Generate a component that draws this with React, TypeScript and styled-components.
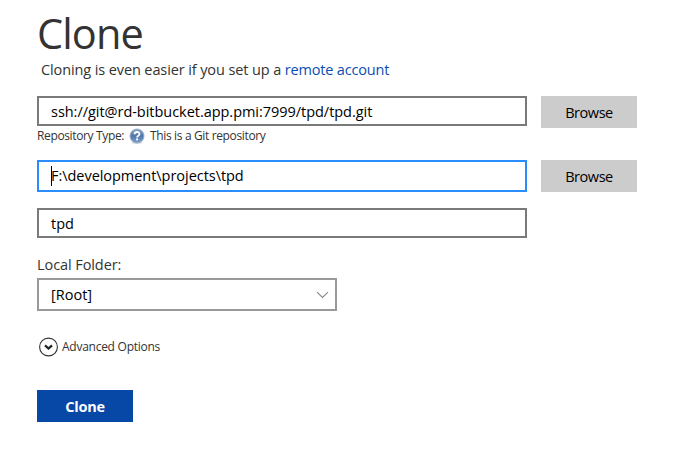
import React from "react";
import styled, { createGlobalStyle } from "styled-components";

const GlobalStyle = createGlobalStyle`
  * { box-sizing: border-box; }
  body {
    margin: 0;
    background: #fff;
    color: #333;
    font-family: "Open Sans", "Noto Sans", sans-serif;
  }
`;

const Page = styled.main`
  display: flex;
  flex-direction: column;
  align-items: flex-start;
  height: 453px;
  padding: 9px 0 0 37px;
  white-space: pre;
`;

const Title = styled.h1`
  margin: 0;
  font-size: 41.5px;
  line-height: 48px;
  font-weight: 400;
  letter-spacing: -0.9px;
`;

const Hint = styled.p`
  margin: 2px 0 0 4px;
  font-size: 14.5px;
  line-height: 21px;
  letter-spacing: -0.11px;
`;

const Link = styled.a`
  color: #0b4db3;
  text-decoration: none;
  letter-spacing: -0.18px;
`;

const FieldRow = styled.div<{ $gap: number; $height?: number }>`
  display: flex;
  gap: 14px;
  height: ${(p) => p.$height ?? 32}px;
  margin-top: ${(p) => p.$gap}px;
`;

const Field = styled.div<{ $focused?: boolean; $height?: number; $spacing?: number; $drop?: number }>`
  display: flex;
  align-items: center;
  width: 490px;
  height: ${(p) => p.$height ?? 30}px;
  padding: ${(p) => p.$drop ?? 0}px 0 0 12px;
  border: 2px solid ${(p) => (p.$focused ? "#2a8dfb" : "#7a7a7a")};
  color: #000;
  font-size: 14.5px;
  line-height: 20px;
  letter-spacing: ${(p) => p.$spacing ?? 0}px;
`;

const Caret = styled.span`
  width: 1px;
  height: 20px;
  margin-right: -1px;
  background: #000;
`;

const Button = styled.button<{ $primary?: boolean }>`
  width: 96px;
  height: 32px;
  padding: 1px 0 0;
  border: 0;
  background: ${(p) => (p.$primary ? "#0747a6" : "#ccc")};
  color: ${(p) => (p.$primary ? "#fff" : "#000")};
  font: ${(p) => (p.$primary ? 700 : 400)} 14.5px/20px "Open Sans", sans-serif;
  letter-spacing: ${(p) => (p.$primary ? -0.2 : -0.45)}px;
`;

const RepoType = styled.div`
  display: flex;
  align-items: center;
  height: 18px;
  margin-top: -1px;
  font-size: 12px;
  line-height: 18px;
  letter-spacing: -0.36px;

  svg { margin: 0 5px 0 5px; }
`;

const Label = styled.label`
  margin-top: 16px;
  font-size: 14.5px;
  line-height: 22px;
  letter-spacing: -0.08px;
`;

const Select = styled.div`
  display: flex;
  align-items: center;
  justify-content: space-between;
  width: 300px;
  height: 33px;
  margin-top: 2px;
  padding: 0 6px 0 12px;
  border: 2px solid #999;
  color: #000;
  font-size: 14.5px;
  line-height: 20px;
`;

const Advanced = styled.div`
  display: flex;
  align-items: center;
  gap: 4px;
  height: 20px;
  margin: 26px 0 33px 1px;
  font-size: 12px;
  line-height: 20px;
  letter-spacing: -0.26px;
`;

const HelpIcon = () => (
  <svg width="16" height="16" viewBox="0 0 16 16">
    <defs>
      <linearGradient id="help" x1="0" y1="0" x2="0" y2="1">
        <stop offset="0" stopColor="#86a5cc" />
        <stop offset="0.5" stopColor="#4f76a9" />
        <stop offset="1" stopColor="#7ba3d2" />
      </linearGradient>
    </defs>
    <ellipse cx="8" cy="14.8" rx="5.5" ry="1.1" fill="#ddd" />
    <circle cx="8" cy="8" r="7" fill="url(#help)" stroke="#9aa9bd" strokeWidth="0.9" />
    <path d="M5.6 6.2C5.6 3.3 10.5 3.3 10.5 6C10.5 7.7 8.1 7.7 8.1 9.5" fill="none" stroke="#fff" strokeWidth="1.8" />
    <rect x="7.1" y="10.5" width="2" height="1.8" fill="#fff" />
  </svg>
);

const SelectArrow = () => (
  <svg width="13" height="8" viewBox="0 0 13 8">
    <path d="M1 1.2L6.5 6.5L12 1.2" fill="none" stroke="#888" strokeWidth="1.1" />
  </svg>
);

const ExpandIcon = () => (
  <svg width="20" height="20" viewBox="0 0 20 20">
    <circle cx="10.5" cy="10" r="8.9" fill="none" stroke="#333" strokeWidth="1.1" />
    <path d="M7 8.4L10.5 11.6L14 8.4" fill="none" stroke="#222" strokeWidth="2.2" />
  </svg>
);

export default function App() {
  return (
    <>
      <GlobalStyle />
      <Page>
        <Title>Clone</Title>
        <Hint>
          Cloning is even easier if you set up a <Link>remote account</Link>
        </Hint>
        <FieldRow $gap={16}>
          <Field $spacing={-0.035} $drop={2}>ssh://git@rd-bitbucket.app.pmi:7999/tpd/tpd.git</Field>
          <Button>Browse</Button>
        </FieldRow>
        <RepoType>
          Repository Type:
          <HelpIcon />
          This is a Git repository
        </RepoType>
        <FieldRow $gap={15}>
          <Field $focused $height={32} $spacing={-0.04}>
            <Caret />
            {"F:\\development\\projects\\tpd"}
          </Field>
          <Button>Browse</Button>
        </FieldRow>
        <FieldRow $gap={16} $height={30}>
          <Field $drop={1}>tpd</Field>
        </FieldRow>
        <Label>Local Folder:</Label>
        <Select>
          [Root]
          <SelectArrow />
        </Select>
        <Advanced>
          <ExpandIcon />
          Advanced Options
        </Advanced>
        <Button $primary>Clone</Button>
      </Page>
    </>
  );
}
